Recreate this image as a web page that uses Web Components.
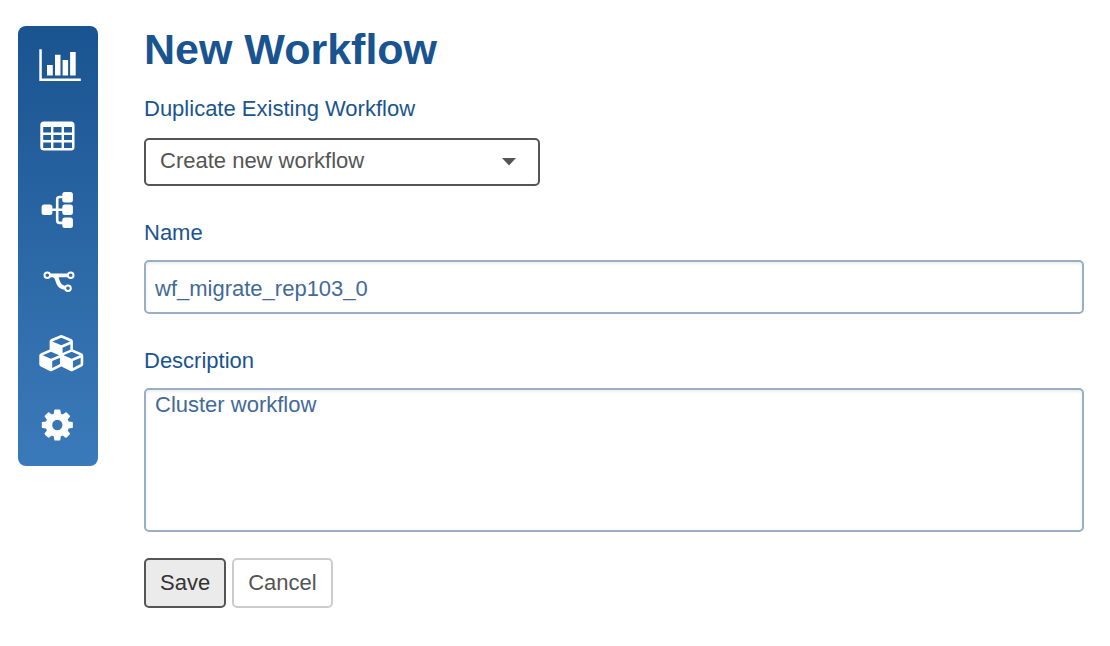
<!DOCTYPE html>
<html lang="en">
<head>
<meta charset="utf-8">
<title>New Workflow</title>
<style>
  body {
    margin: 0;
    background: #fff;
    font: 22px/28px "Liberation Sans", Arial, sans-serif;
    color: #1a5490;
  }
</style>
</head>
<body>
<workflow-page></workflow-page>

<template id="side-nav">
  <style>
    :host { display: block; flex: none; width: 80px; }
    nav {
      display: flex;
      flex-direction: column;
      padding: 4px 0;
      border-radius: 8px;
      background: linear-gradient(#1a5490, #3b7aba);
    }
    a { display: block; height: 72px; color: #fff; }
    svg { display: block; width: 80px; height: 72px; fill: currentColor; }
    .line { fill: none; stroke: currentColor; }
  </style>
  <nav aria-label="Main">
    <a href="#dashboard" aria-label="Dashboard">
      <svg viewBox="0 0 80 72"><path d="M21.300 19.300h2.500v29.200h39v2.500H21.300zM29 35h5.800v10.500H29zM37 24.700h5.500v20.800H37zM44.600 30h5.500v15.500h-5.500zM52.100 22h5.600v23.500h-5.600z"/></svg>
    </a>
    <a href="#table" aria-label="Table">
      <svg viewBox="0 0 80 72"><path transform="translate(0 .4)" fill-rule="evenodd" d="M25.800 19h27.200a3.500 3.500 0 0 1 3.500 3.500v22a3.500 3.500 0 0 1-3.500 3.500H25.800a3.500 3.500 0 0 1-3.500-3.500v-22a3.500 3.500 0 0 1 3.500-3.500zM25.200 24.700V30h7.800v-5.300zM35.400 24.700V30h8.200v-5.300zM46 24.700V30h8v-5.300zM25.200 32.500v5.200h7.800v-5.200zM35.400 32.500v5.200h8.200v-5.200zM46 32.500v5.200h8v-5.200zM25.200 40.200v5.300h7.800v-5.300zM35.400 40.200v5.300h8.200v-5.300zM46 40.200v5.300h8v-5.300z"/></svg>
    </a>
    <a href="#topology" aria-label="Topology">
      <svg viewBox="0 0 80 72">
        <rect x="23.600" y="30.500" width="10.800" height="10.600" rx="2.500"/>
        <rect x="44.300" y="17.900" width="10.600" height="10.600" rx="2.500"/>
        <rect x="44.300" y="30.500" width="10.600" height="10.600" rx="2.500"/>
        <rect x="44.300" y="43.500" width="10.600" height="10.600" rx="2.500"/>
        <path class="line" stroke-width="2.600" d="M34 35.800h11M45 23h-3.500q-2.300 0-2.300 2.300v21.300q0 2.300 2.300 2.300H45"/>
      </svg>
    </a>
    <a href="#workflows" aria-label="Workflows">
      <svg viewBox="0 0 80 72">
        <g class="line" stroke-width="2">
          <circle cx="29.300" cy="29.300" r="2.800"/>
          <circle cx="52.700" cy="29.300" r="2.800"/>
          <circle cx="50" cy="42.300" r="2.800"/>
        </g>
        <path d="M32.300 27.400h17.400v3.800H40.600c1.300 4 2.200 7.800 7 8.900l-.7 3.600c-9.500-.9-8.400-9-11-11.900-.8-.6-2.200-.6-3.600-.6z"/>
      </svg>
    </a>
    <a href="#clusters" aria-label="Clusters">
      <svg viewBox="0 0 80 72"><path transform="translate(21.300 17) scale(.0202)" d="M640 1632l384-192v-314l-384 164v342zM576 1178l404-173l-404-173l-404 173zM1664 1632l384-192v-314l-384 164v342zM1600 1178l404-173l-404-173l-404 173zM1152 893l384-165v-266l-384 164v267zM1088 512l441-189l-441-189l-441 189zM2176 1024v416q0 36-19 67t-52 47l-448 224q-25 14-57 14t-57-14l-448-224q-4-2-7-4q-2 2-7 4l-448 224q-25 14-57 14t-57-14l-448-224q-33-16-52-47t-19-67v-416q0-38 21.500-70t56.500-48l434-186v-400q0-38 21.500-70t56.500-48l448-192q23-10 50-10t50 10l448 192q35 16 56.500 48t21.500 70v400l434 186q36 16 57 48t21 70z"/></svg>
    </a>
    <a href="#settings" aria-label="Settings">
      <svg viewBox="0 0 80 72"><path transform="translate(23.800 22.100) scale(.0202)" d="M1024 640q0 106-75 181t-181 75t-181-75t-75-181t75-181t181-75t181 75t75 181zM1536 749v-222q0-12-8-23t-20-13l-185-28q-19-54-39-91q35-50 107-138q10-12 10-25t-9-23q-27-37-99-108t-94-71q-12 0-26 9l-138 108q-44-23-91-38q-16-136-29-186q-7-28-36-28h-222q-14 0-24.500 8.500t-11.500 21.500l-28 184q-49 16-90 37l-141-107q-10-9-25-9q-14 0-25 11q-126 114-165 168q-7 10-7 23q0 12 8 23q15 21 51 66.500t54 70.500q-27 50-41 99l-183 27q-13 2-21 12.500t-8 23.500v222q0 12 8 23t19 13l186 28q14 46 39 92q-40 57-107 138q-10 12-10 24q0 10 9 23q26 36 98.500 107.500t94.500 71.500q13 0 26-10l138-107q44 23 91 38q16 136 29 186q7 28 36 28h222q14 0 24.500-8.500t11.500-21.500l28-184q49-16 90-37l142 107q9 9 24 9q13 0 25-10q129-119 165-170q7-8 7-22q0-12-8-23q-15-21-51-66.500t-54-70.500q26-50 41-98l183-28q13-2 21-12.500t8-23.500z"/></svg>
    </a>
  </nav>
</template>

<template id="select-field">
  <style>
    :host { display: grid; gap: 15px; justify-items: start; }
    .box { display: grid; align-items: center; width: 396px; max-width: 100%; }
    select, svg { grid-area: 1 / 1; }
    select {
      appearance: none;
      box-sizing: border-box;
      width: 100%;
      height: 48px;
      margin: 0;
      padding: 0 48px 2px 14px;
      border: 2px solid #555;
      border-radius: 5px;
      background: #fff;
      color: #555;
      font: inherit;
    }
    svg { justify-self: end; width: 14px; height: 8px; margin-right: 24px; fill: #555; pointer-events: none; }
  </style>
  <label for="control"></label>
  <div class="box">
    <select id="control"><option></option></select>
    <svg viewBox="0 0 14 8" aria-hidden="true"><path d="M0 0h14L7 7.500z"/></svg>
  </div>
</template>

<template id="text-field">
  <style>
    :host { display: grid; gap: 13px; }
    input, textarea {
      display: block;
      box-sizing: border-box;
      width: 100%;
      margin: 0;
      border: 2px solid #9aaec4;
      border-radius: 5px;
      background: #fff;
      box-shadow: inset 0 2px 3px rgba(0, 0, 0, .07);
      color: #426a98;
      font: inherit;
      resize: none;
    }
    input { height: 54px; padding: 4px 9px 0; }
    textarea { height: 144px; padding: 1px 9px; }
  </style>
  <label for="control"></label>
</template>

<template id="action-button">
  <style>
    :host { display: block; }
    button {
      display: block;
      height: 50px;
      margin: 0;
      padding: 0 14px;
      border: 2px solid #ccc;
      border-radius: 5px;
      background: #fff;
      color: #555;
      font: inherit;
    }
    :host([primary]) button { border-color: #555; background: #ebebeb; color: #333; }
  </style>
  <button type="button"><slot></slot></button>
</template>

<template id="workflow-page">
  <style>
    :host { display: flex; align-items: flex-start; gap: 46px; padding: 26px 26px 26px 18px; }
    main { flex: 1; min-width: 0; }
    h1 { margin: 0 0 23px; font-size: 43px; line-height: 46px; }
    .fields { display: grid; gap: 33px; }
    .actions { display: flex; gap: 6px; margin-top: 26px; }
  </style>
  <side-nav></side-nav>
  <main>
    <h1>New Workflow</h1>
    <div class="fields">
      <select-field label="Duplicate Existing Workflow" value="Create new workflow"></select-field>
      <text-field label="Name" value="wf_migrate_rep103_0"></text-field>
      <text-field label="Description" value="Cluster workflow" multiline></text-field>
    </div>
    <div class="actions">
      <action-button primary>Save</action-button>
      <action-button>Cancel</action-button>
    </div>
  </main>
</template>

<script>
  class TemplateElement extends HTMLElement {
    constructor() {
      super();
      const template = document.getElementById(this.localName);
      this.attachShadow({ mode: "open" }).append(template.content.cloneNode(true));
    }
  }

  class SideNav extends TemplateElement {}
  class ActionButton extends TemplateElement {}
  class WorkflowPage extends TemplateElement {}

  class SelectField extends TemplateElement {
    connectedCallback() {
      this.shadowRoot.querySelector("label").textContent = this.getAttribute("label");
      this.shadowRoot.querySelector("option").textContent = this.getAttribute("value");
    }
  }

  class TextField extends TemplateElement {
    connectedCallback() {
      if (this.shadowRoot.getElementById("control")) return;
      this.shadowRoot.querySelector("label").textContent = this.getAttribute("label");
      const control = document.createElement(this.hasAttribute("multiline") ? "textarea" : "input");
      control.id = "control";
      control.value = this.getAttribute("value");
      control.spellcheck = false;
      this.shadowRoot.append(control);
    }
  }

  customElements.define("side-nav", SideNav);
  customElements.define("select-field", SelectField);
  customElements.define("text-field", TextField);
  customElements.define("action-button", ActionButton);
  customElements.define("workflow-page", WorkflowPage);
</script>
</body>
</html>
